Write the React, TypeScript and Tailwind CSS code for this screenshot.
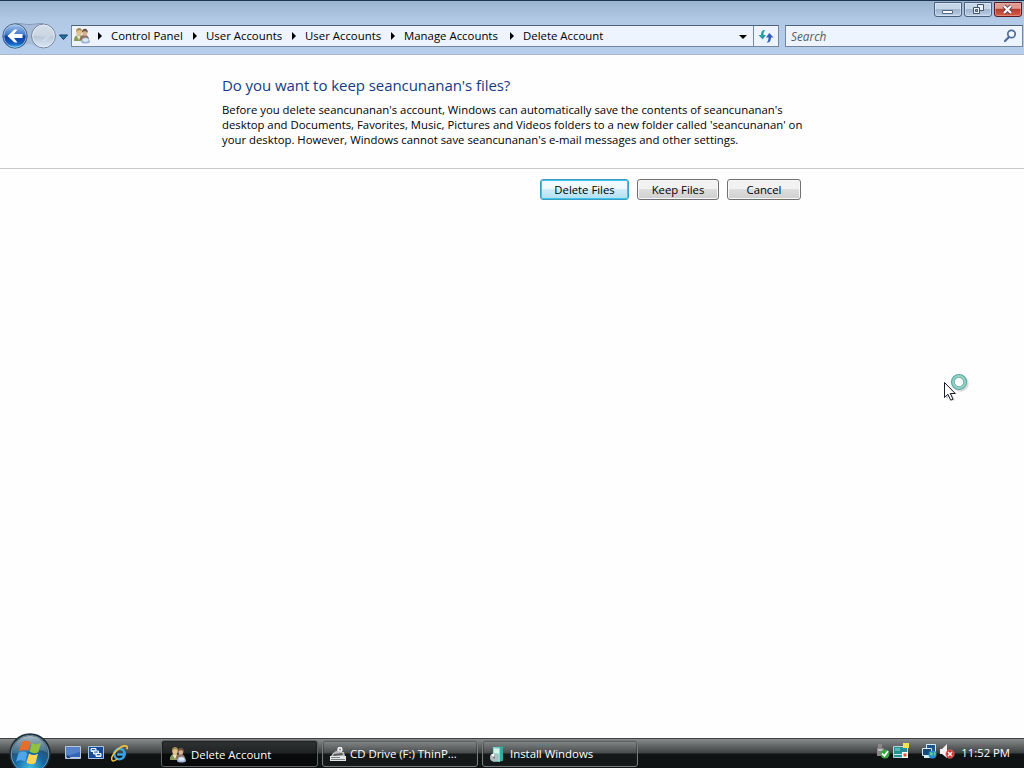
import React from 'react';

const crumbs = [
  { label: 'Control Panel', width: 'w-[95px]' },
  { label: 'User Accounts', width: 'w-[99px]' },
  { label: 'User Accounts', width: 'w-[99px]' },
  { label: 'Manage Accounts', width: 'w-[119px]' },
  { label: 'Delete Account', width: 'w-[100px]' },
];

const UsersIcon = ({ className = '' }: { className?: string }) => (
  <svg viewBox="0 0 16 16" className={`w-4 h-4 shrink-0 ${className}`}>
    <path d="M0 12C0 8.500 2 7 5 7s5 2 5 5v1H0z" fill="#8a9a58" />
    <path d="M2.500 7.500 5 12l2-4.500z" fill="#e8e6cf" />
    <path d="M6 12c0-4 1.500-5 4.500-5S15 8.500 15 12z" fill="#93705c" />
    <ellipse cx="5" cy="4" rx="2.800" ry="3.600" fill="#e3c08e" />
    <path d="M2 4C2 1 3.500 0 5.200 0S8 1.500 8 3.500C6.500 1.500 4 2 2 4z" fill="#a58d4d" />
    <ellipse cx="10.800" cy="4.500" rx="2.500" ry="3.300" fill="#d8b092" />
    <path d="M8 4.500C8 2 9 .8 11 .8s3 1.700 2.700 4C12.500 3 10 2.500 8 4.500z" fill="#6e5140" />
    <path d="M7 14c0-2.500 2-4.500 4.500-4.500s4.500 2 4.500 4.500c-1 2-8 2-9 0z" fill="#9fb4d2" />
    <ellipse cx="11.500" cy="12" rx="3" ry="1.800" fill="#dce8f6" />
  </svg>
);

const DriveIcon = () => (
  <svg viewBox="0 0 16 16" className="w-4 h-4 shrink-0">
    <path d="M8 1h4v5l2 2H7z" fill="#d8d8d8" />
    <circle cx="10" cy="3.500" r="2.600" fill="#f3f3f3" />
    <circle cx="10" cy="3.500" r=".9" fill="#777" />
    <path d="m3 7 3-2 8 1 1 4H1z" fill="#b9bcbc" />
    <path d="m4 8 8-1 1 2-10 1z" fill="#55595b" />
    <path d="M0 10h16v5H0z" fill="#e4e6e6" />
    <path d="M1 11h9v1H1zM1 13h14v1H1z" fill="#7d8181" />
  </svg>
);

const InstallIcon = () => (
  <svg viewBox="0 0 16 16" className="w-4 h-4 shrink-0">
    <path d="m3 1 10-.5V15l-10 1z" fill="#36aaa2" />
    <path d="m3 1 7 .5V16l-7-1z" fill="#8fd6cd" />
    <path d="m4 2.500 5 .5v4.500L4 7z" fill="#d4f4ee" />
    <circle cx="4" cy="11.500" r="4" fill="#b4bcbc" />
    <path d="m4 11.500-3-2.500a4 4 0 0 1 3-1.500z" fill="#f8ffff" />
    <circle cx="4" cy="11.500" r="1" fill="#687677" />
  </svg>
);

const NavButtons = () => (
  <svg viewBox="0 0 70 30" className="w-[70px] h-[30px] shrink-0">
    <defs>
      <linearGradient id="back" x1="0" y1="0" x2="0" y2="1">
        <stop offset="0" stopColor="#a7c6ed" />
        <stop offset=".46" stopColor="#3e77c8" />
        <stop offset=".5" stopColor="#0c3b9b" />
        <stop offset=".8" stopColor="#155cc0" />
        <stop offset="1" stopColor="#43c8f2" />
      </linearGradient>
      <linearGradient id="forward" x1="0" y1="0" x2="0" y2="1">
        <stop offset="0" stopColor="#d5dfeb" />
        <stop offset=".48" stopColor="#cbd6e3" />
        <stop offset=".52" stopColor="#b9c7d7" />
        <stop offset="1" stopColor="#dce9f7" />
      </linearGradient>
    </defs>
    <path d="M15 3c8-1 9 .5 14 .5S36 3 43 3v22c-7 3-9-2-14-2s-6 5-14 3z" fill="#a6bcd8" />
    <path d="M15 2.500c8 0 9 1 14 1s7-1 14-1" fill="none" stroke="#8298b5" />
    <circle cx="15" cy="15" r="12.200" fill="url(#back)" stroke="#496282" />
    <circle cx="15" cy="15" r="11.200" fill="none" stroke="#bdd7f6" strokeOpacity=".65" />
    <path d="m7.500 15 7-6.500h3L14 13h8.500v4H14l3.500 4.500h-3z" fill="#fff" />
    <circle cx="43.500" cy="15" r="11.900" fill="url(#forward)" stroke="#728299" />
    <circle cx="43.500" cy="15" r="10.900" fill="none" stroke="#edf4fa" strokeOpacity=".7" />
    <path d="M36 16h10l-4 4h3l6-5" fill="#d5e0eb" fillOpacity=".7" />
    <path d="M59.500 14h8l-4 4.500z" fill="#1b7aa9" stroke="#123a67" />
  </svg>
);

const StartOrb = () => (
  <svg viewBox="0 0 44 36" className="absolute left-[8px] -top-[7px] w-[44px] h-[36px]">
    <defs>
      <radialGradient id="orb" cx=".5" cy=".85" r=".75">
        <stop offset="0" stopColor="#42bdeb" />
        <stop offset=".5" stopColor="#1565a0" />
        <stop offset=".85" stopColor="#304f65" />
        <stop offset="1" stopColor="#182c3a" />
      </radialGradient>
      <linearGradient id="orbShine" x1="0" y1="0" x2="0" y2="1">
        <stop offset="0" stopColor="#d3e3ea" stopOpacity=".8" />
        <stop offset="1" stopColor="#73a2bc" stopOpacity=".3" />
      </linearGradient>
    </defs>
    <circle cx="22" cy="22" r="20" fill="url(#orb)" stroke="#1d2d36" strokeWidth="1.500" />
    <circle cx="22" cy="22" r="18.700" fill="none" stroke="#a0c5d5" strokeOpacity=".6" />
    <path d="M4 21C5 10 13 4 22 4s17 6 18 17C29 14 16 23 4 21z" fill="url(#orbShine)" />
    <path d="M14 10c3-2 6-1.500 8.500.2L20 19c-3-2-6-1.500-9 .2z" fill="#e86d2c" />
    <path d="M24 11c3 1.800 6 1.500 9-.2L30.500 20c-3 1.800-6 1.500-9-.4z" fill="#92c13f" />
    <path d="M10.500 21c3-1.800 6-2 9 0L17 29.500c-3-1.800-6-1.500-9 .2z" fill="#4fa5e8" />
    <path d="M21 21.500c3 2 6 2 9 .3L27.500 31c-3 1.800-6 1.500-9-.4z" fill="#ffd451" />
  </svg>
);

const DesktopIcon = () => (
  <svg viewBox="0 0 16 14" className="w-4 h-[14px]">
    <path d="M.5.500h15v12H.5z" fill="#3566b8" stroke="#b6c7dc" />
    <path d="M1 1h14v5L1 10z" fill="#5582c8" />
    <path d="M1 11h14v1H1z" fill="#b8cce4" />
    <path d="m2 9 4 3H2z" fill="#253f67" />
  </svg>
);

const SwitcherIcon = () => (
  <svg viewBox="0 0 16 14" className="w-4 h-[14px]">
    <path d="M.5.500h15v12H.5z" fill="#174a96" stroke="#a9c2e1" />
    <path d="M3 2.500h5v3H3zM5.500 5h5v3h-5zM8 7.500h5v3H8z" fill="#b4cdeb" stroke="#e6f1fb" />
    <path d="M4 3.500h3M6.500 6h3M9 8.500h3" stroke="#2b61ab" />
  </svg>
);

const IeIcon = () => (
  <svg viewBox="0 0 18 18" className="w-[17px] h-[17px]">
    <path d="M14 11.500c-1 2.500-3 3.500-5 3.500-3.500 0-5.500-2.500-5.500-5.500S6 4 9 4s5.500 2.500 5.500 6H6.500" fill="none" stroke="#35a8eb" strokeWidth="2.700" />
    <path d="M1 16C-1 12 9 0 16 1c1.500.2 1.500 2 .8 3.500" fill="none" stroke="#efc43e" strokeWidth="1.700" />
    <path d="M1 16c1 2 4 0 6-1.500" fill="none" stroke="#efc43e" strokeWidth="1.500" />
  </svg>
);

const Tray = () => (
  <svg viewBox="0 0 80 18" className="w-[80px] h-[18px] shrink-0 -translate-y-px">
    {/* safely remove hardware */}
    <path d="M3 1h4v4H3zM2 5h7v8H2z" fill="#8b8589" />
    <path d="M3 6h5v2H3z" fill="#c1bdc0" />
    <circle cx="10" cy="11" r="4.500" fill="#3aa544" />
    <path d="m7 10.500 2.500 2.500L13 8" fill="none" stroke="#fff" strokeWidth="1.700" />
    {/* virtual machine tools */}
    <path d="M18.500 3.500h14v11h-14z" fill="#268f92" stroke="#b9d6d9" />
    <path d="M20 5h5v3h-5z" fill="#55b8bd" />
    <path d="M19 11.500h8" stroke="#cae9ea" />
    <path d="M28 0h6v5h-6z" fill="#f0e35c" />
    <path d="M27 9h6v6h-6z" fill="#fff" />
    <path d="M28.500 10.500h3v3h-3z" fill="#d65136" />
    {/* network */}
    <path d="M51.500 1.500h9v7h-9z" fill="#1c5688" stroke="#d5edf8" />
    <path d="M47.500 5.500h9v7h-9z" fill="#174878" stroke="#d5edf8" />
    <path d="M49 14h6" stroke="#d5edf8" strokeWidth="2" />
    <circle cx="57.500" cy="11.500" r="4" fill="#268dd4" />
    <path d="m55 9 3 1-1 3-2-1zM59 8l2 3-2 2z" fill="#62c9a0" />
    {/* muted volume */}
    <path d="M65 6h2l5-5v14l-5-4h-2z" fill="#f0f0f0" />
    <circle cx="75" cy="11" r="4.200" fill="#d32c2c" stroke="#ef8b80" strokeWidth=".6" />
    <path d="m73 9 4 4m0-4-4 4" stroke="#fff" strokeWidth="1.500" />
  </svg>
);

const BusyCursor = () => (
  <svg viewBox="0 0 28 32" className="absolute left-[942px] top-[372px] w-[28px] h-[32px]">
    <circle cx="18.500" cy="11.500" r="7" fill="none" stroke="#b8bebe" strokeWidth="2.500" opacity=".5" />
    <circle cx="17" cy="10" r="6.200" fill="#fefefe" stroke="#5aa99f" strokeWidth="3.800" />
    <circle cx="17" cy="10" r="6" fill="none" stroke="#9ad3c8" strokeWidth="1.800" />
    <path d="M4 12v15l4-3 3 5 2-1-3-6h5z" fill="#777" opacity=".3" />
    <path d="M2.500 10.500v15l3.400-3.200 2.800 5.900 2.300-1-2.700-5.700h4.900z" fill="#fff" stroke="#171b26" />
  </svg>
);

const CaptionButtons = () => (
  <div className="flex gap-[2px] pr-[2px] pt-px">
    <div className="w-[28px] h-[15px] rounded-b-[3px] border border-[#4c607d] bg-linear-to-b from-[#c6d6e9] from-45% via-[#9fb4ce] via-50% to-[#bcd0e9] flex justify-center shadow-[inset_0_0_0_1px_#e6eff880]">
      <svg viewBox="0 0 12 13" className="w-3 h-[13px]"><path d="M.5 7.500h10v3H.5z" fill="#fff" stroke="#536480" /></svg>
    </div>
    <div className="w-[28px] h-[15px] rounded-b-[3px] border border-[#4c607d] bg-linear-to-b from-[#c6d6e9] from-45% via-[#9fb4ce] via-50% to-[#bcd0e9] flex justify-center shadow-[inset_0_0_0_1px_#e6eff880]">
      <svg viewBox="0 0 13 13" className="w-[13px] h-[13px]" fill="#edf3fa" stroke="#43536c">
        <path d="M5.500 1.500h6v6h-6z" />
        <path d="M1.500 4.500h6v6h-6z" />
        <path d="M3.500 6.500h2v2h-2z" fill="#9eb0c8" />
      </svg>
    </div>
    <div className="w-[28px] h-[15px] rounded-b-[3px] border border-[#5b1b25] bg-linear-to-b from-[#df9b91] from-40% via-[#b93c30] via-50% to-[#d65d43] flex justify-center shadow-[inset_0_0_0_1px_#edb8aa80]">
      <svg viewBox="0 0 12 13" className="w-3 h-[13px]">
        <path d="m2 3 7 7m0-7-7 7" stroke="#653f49" strokeWidth="4" />
        <path d="m2 3 7 7m0-7-7 7" stroke="#fff" strokeWidth="2.200" />
      </svg>
    </div>
  </div>
);

const PushButton = ({ children, className }: { children: React.ReactNode; className: string }) => (
  <button className={`h-[21px] rounded-[3px] border pb-px text-[11.3px] leading-[17px] whitespace-nowrap bg-linear-to-b ${className}`}>
    {children}
  </button>
);

const TaskButton = ({ icon, label, active }: { icon: React.ReactNode; label: string; active?: boolean }) => (
  <div
    className={`h-[27px] rounded-[3px] border flex items-center text-white text-[11.4px] whitespace-nowrap ${
      active
        ? 'w-[157px] gap-[5px] pl-[8px] border-[#606466] bg-linear-to-b from-[#303334] from-0% via-[#202223] via-48% to-[#080a0b] to-52% pt-[2px] shadow-[inset_0_0_2px_#000]'
        : 'w-[156px] gap-[4px] pl-[7px] border-[#777b7d] bg-linear-to-b from-[#858989] from-0% via-[#494c4d] via-48% to-[#151819] to-52% shadow-[inset_0_0_0_1px_#20222460]'
    }`}
  >
    {icon}
    <span>{label}</span>
  </div>
);

export default function App() {
  return (
    <div className="relative w-[1024px] h-[768px] overflow-hidden flex flex-col bg-[#fefefe] text-black font-['Open_Sans','Noto_Sans',sans-serif]">
      <header className="h-[55px] shrink-0 border-t border-[#1e3552] border-b border-b-[#aab7d1] bg-linear-to-b from-[#9ab3cf] from-0% via-[#b2c9e6] via-35% to-[#b6cdec] flex flex-col">
        <div className="h-[20px] shrink-0 flex justify-end">
          <CaptionButtons />
        </div>
        <div className="h-[30px] flex items-center text-[11.4px]">
          <NavButtons />
          <div className="ml-[1px] w-[683px] h-[22px] border border-[#74879d] border-t-[#4d6176] bg-[#edf4fd] flex items-center pl-[2px] whitespace-nowrap">
            <UsersIcon />
            <div className="ml-[8px] flex flex-1">
              {crumbs.map((c, i) => (
                <div key={i} className={`flex items-center shrink-0 ${c.width}`}>
                  <svg viewBox="0 0 13 8" className="w-[13px] h-[8px] shrink-0"><path d="M0 0v8l4-4z" /></svg>
                  <span>{c.label}</span>
                </div>
              ))}
            </div>
            <svg viewBox="0 0 8 4" className="w-[8px] h-[4px] mr-[6px] mt-[2px]"><path d="M0 0h8L4 4z" /></svg>
          </div>
          <div className="w-[25px] h-[22px] border border-l-0 border-[#74879d] border-t-[#4d6176] bg-[#edf4fd] flex items-center justify-center">
            <svg viewBox="0 0 16 16" className="w-4 h-4">
              <path d="M7.500 2C4.500 1.500 3 3.500 3 7H.5l4.200 4.500L8 7H5.500c0-2.500.5-4 2-5z" fill="#2a9ba7" />
              <path d="M8.500 14.500c3 .5 4.500-1.500 4.500-5h2.500L11.300 5 8 9.500h2.500c0 2.500-.5 4-2 5z" fill="#315fbc" />
            </svg>
          </div>
          <div className="ml-[6px] w-[238px] h-[22px] border border-[#74879d] border-t-[#4d6176] bg-[#edf4fd] flex items-center justify-between pl-[5px] pr-[5px]">
            <span className="italic text-[#565c64] text-[11.8px] pt-px">Search</span>
            <svg viewBox="0 0 14 14" className="w-[14px] h-[14px]">
              <circle cx="8.500" cy="5" r="3.700" fill="#f7fbff" stroke="#4b6b99" strokeWidth="1.700" />
              <path d="M6 8 2 12" stroke="#4b6b99" strokeWidth="2.200" strokeLinecap="round" />
            </svg>
          </div>
        </div>
      </header>

      <main className="flex-1">
        <section className="h-[114px] border-b border-[#c8c8c8] pl-[222px] pt-[19px] whitespace-nowrap">
          <h1 className="text-[15px] tracking-[-0.06px] leading-[22px] text-[#143a87]">Do you want to keep seancunanan's files?</h1>
          <p className="mt-[6px] text-[11.34px] leading-[15px]">
            <span className="block">Before you delete seancunanan's account, Windows can automatically save the contents of seancunanan's</span>
            <span className="block">desktop and Documents, Favorites, Music, Pictures and Videos folders to a new folder called 'seancunanan' on</span>
            <span className="block">your desktop. However, Windows cannot save seancunanan's e-mail messages and other settings.</span>
          </p>
        </section>
        <div className="flex gap-[8px] pl-[540px] pt-[10px]">
          <PushButton className="w-[89px] border-[#3c9cc1] from-[#eefaff] from-45% via-[#cfecf8] via-50% to-[#b0e0f3] shadow-[inset_0_0_0_1px_#39c5ed]">Delete Files</PushButton>
          <PushButton className="w-[82px] border-[#707070] from-[#f2f2f2] from-45% via-[#dddddd] via-50% to-[#cfcfcf] shadow-[inset_0_0_0_1px_#f8f8f8]">Keep Files</PushButton>
          <PushButton className="w-[74px] border-[#707070] from-[#f2f2f2] from-45% via-[#dddddd] via-50% to-[#cfcfcf] shadow-[inset_0_0_0_1px_#f8f8f8]">Cancel</PushButton>
        </div>
      </main>

      <footer className="relative h-[30px] shrink-0 border-t border-[#3f4242] bg-linear-to-b from-[#898c8c] from-0% via-[#3e4142] via-48% to-[#101314] to-52% flex text-[11.3px]">
        <StartOrb />
        <div className="w-[161px] shrink-0 pl-[65px] pb-px flex items-center gap-[7px]">
          <DesktopIcon />
          <SwitcherIcon />
          <IeIcon />
        </div>
        <div className="flex gap-[4px] pt-px">
          <TaskButton active icon={<UsersIcon />} label="Delete Account" />
          <TaskButton icon={<DriveIcon />} label="CD Drive (F:) ThinP..." />
          <TaskButton icon={<InstallIcon />} label="Install Windows" />
        </div>
        <div className="ml-auto flex items-center pr-[14px] pb-px text-white whitespace-nowrap">
          <Tray />
          <span className="ml-[6px]">11:52 PM</span>
        </div>
      </footer>
      <BusyCursor />
    </div>
  );
}
